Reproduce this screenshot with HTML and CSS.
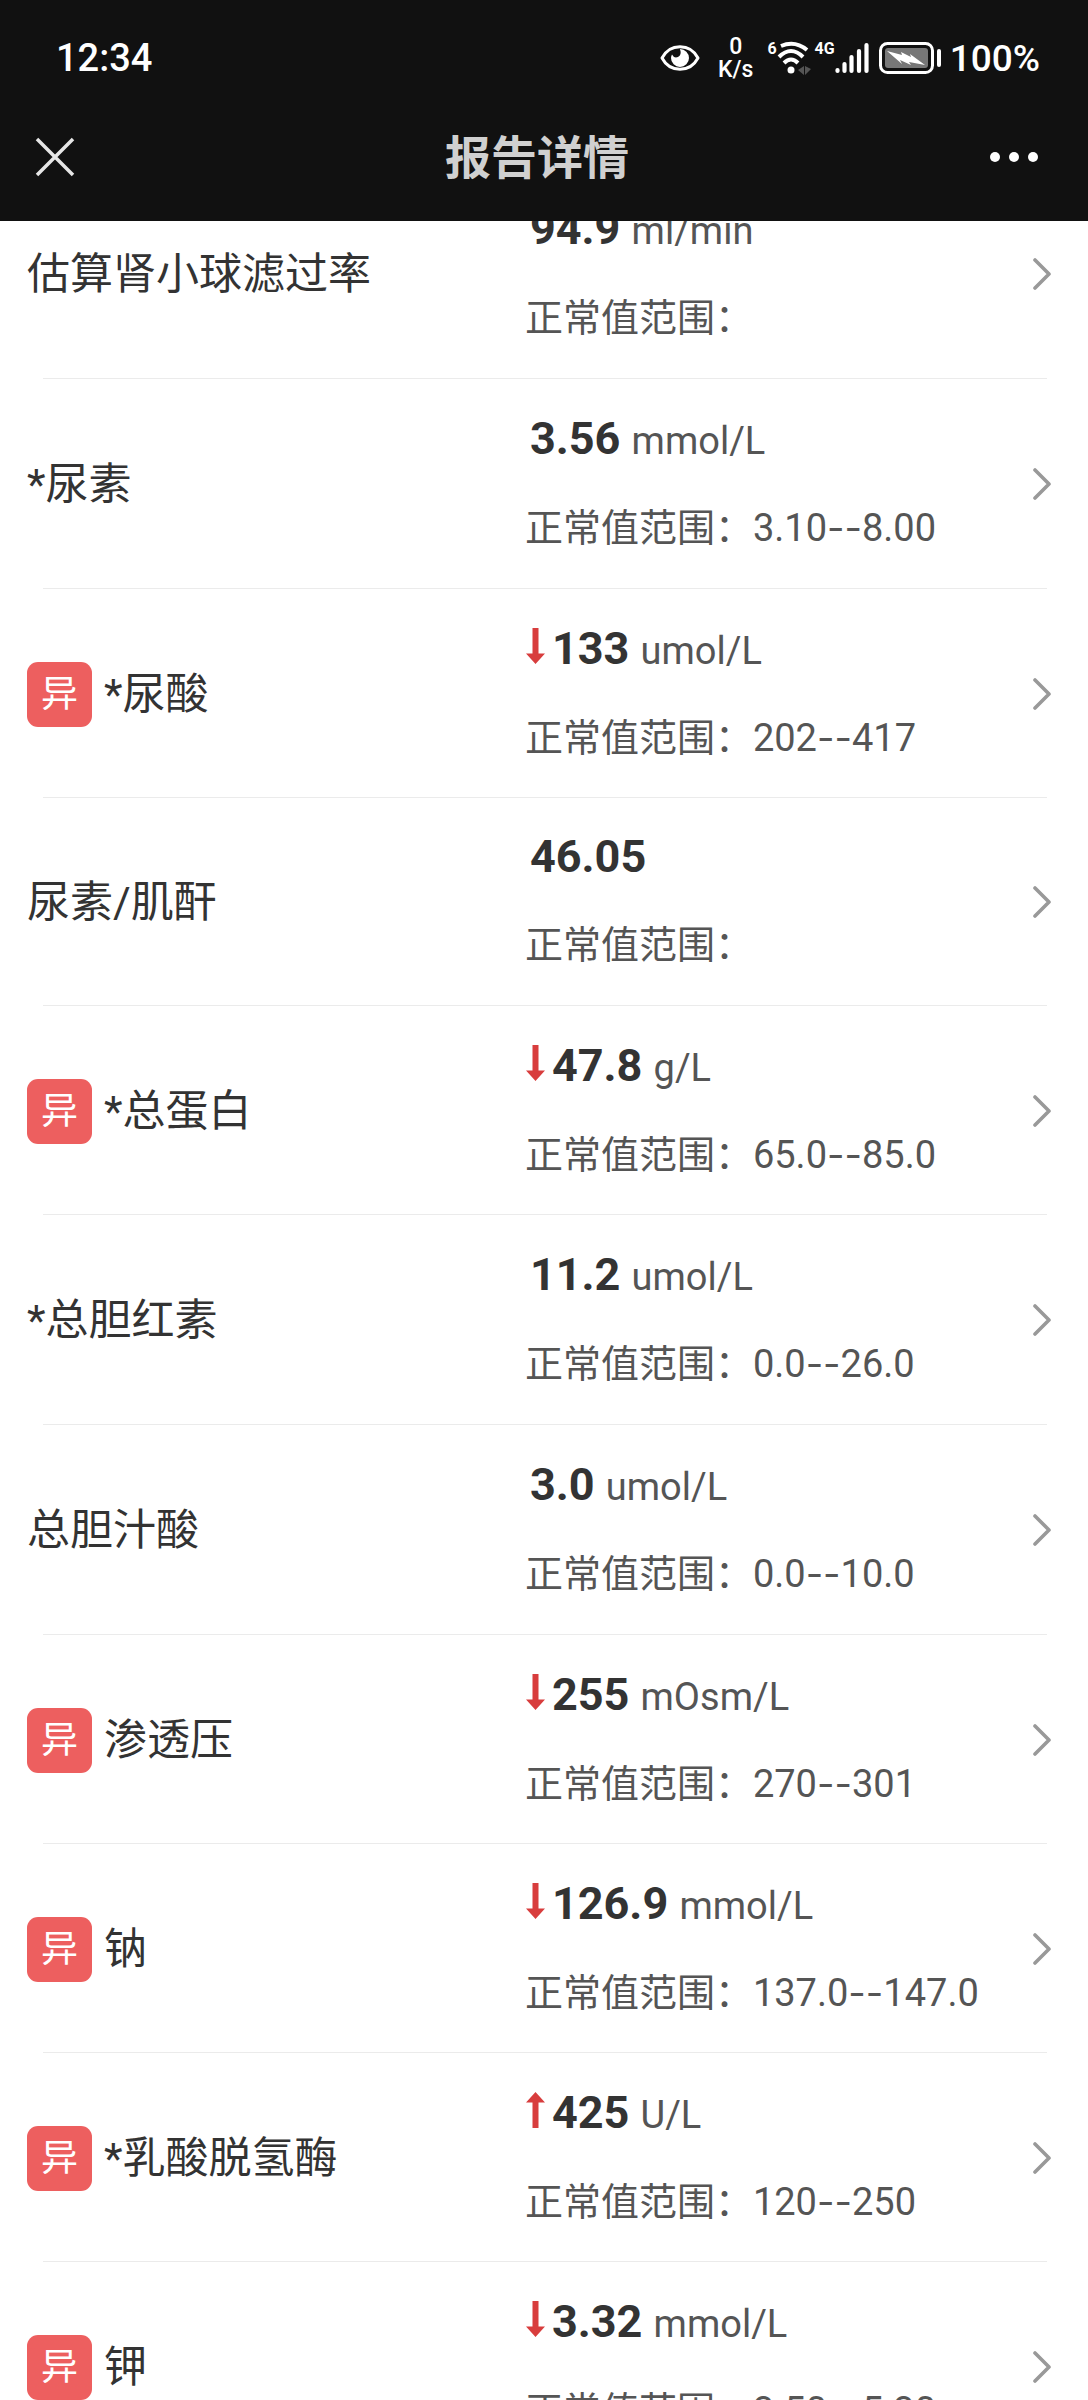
FILE: index.html
```html
<!DOCTYPE html>
<html lang="zh-CN">
<head>
  <meta charset="UTF-8" />
  <meta name="viewport" content="width=device-width, initial-scale=1.0" />
  <title>报告详情</title>
  <link rel="stylesheet" href="styles.css">
</head>
<body>
  <!-- shared icons -->
  <svg class="sprite" aria-hidden="true">
    <symbol id="chevron" viewBox="0 0 18 34">
      <path d="M2 3 L16 17 L2 31" fill="none" stroke="#999" stroke-width="3.6" stroke-linecap="round" stroke-linejoin="round" />
    </symbol>
    <symbol id="arrow-down" viewBox="0 0 19 36">
      <path d="M6.500 0h6v25.500h6.500L9.500 36L0 25.500h6.500z" fill="#d83d3d" />
    </symbol>
    <symbol id="arrow-up" viewBox="0 0 19 36">
      <path d="M6.500 36h6V10.500h6.500L9.500 0L0 10.500h6.500z" fill="#d83d3d" />
    </symbol>
  </svg>

  <header class="top">
    <div class="status">
      <span class="time">12:34</span>
      <div class="status-icons">
        <svg class="eye" width="40" height="28" viewBox="0 0 40 28">
          <path d="M2 14 C10 -1 30 -1 38 14 C30 29 10 29 2 14z" fill="none" stroke="#fff" stroke-width="3" stroke-linejoin="round" />
          <path d="M20 5 a9 9 0 1 1 -9 9 q0 -2 1 -3.500 q2 4 6 2.500 q4 -2 2 -8z" fill="#fff" />
        </svg>
        <div class="speed"><span>0</span><span>K/s</span></div>
        <div class="wifi">
          <span class="tiny">6</span>
          <svg width="34" height="34" viewBox="0 0 34 34">
            <g fill="none" stroke="#fff" stroke-width="4">
              <path d="M4 5 Q18 -1 30 9" />
              <path d="M2 16 Q14 4 26 16" />
              <path d="M7 22 Q14 15 21 22" />
            </g>
            <circle cx="14" cy="29" r="3.500" fill="#fff" />
            <path d="M21 29l6 -4v9zM28 25l6 3l-6 6z" fill="#555" />
          </svg>
        </div>
        <div class="cell">
          <span class="tiny">4G</span>
          <svg width="34" height="34" viewBox="0 0 34 34">
            <g stroke="#fff" stroke-width="4.200" stroke-linecap="round">
              <path d="M2.500 29v1" /><path d="M9.500 23v7" /><path d="M16.500 16v14" /><path d="M24 10v20" /><path d="M31.500 4v26" />
            </g>
          </svg>
        </div>
        <svg class="battery" width="63" height="32" viewBox="0 0 63 32">
          <rect x="1.500" y="1.500" width="52" height="29" rx="7" fill="none" stroke="#fff" stroke-width="3" />
          <rect x="6" y="6" width="43" height="20" rx="3" fill="#777" />
          <path d="M8 9l15 4l-1 -3l10 5l-1 -3l15 11l-16 -3l2 3l-11 -5l2 4z" fill="#fff" />
          <path d="M60 9v14" stroke="#fff" stroke-width="4" stroke-linecap="round" />
        </svg>
        <span class="percent">100%</span>
      </div>
    </div>
    <nav class="nav">
      <button class="nav-btn" type="button" aria-label="关闭">
        <svg width="40" height="40" viewBox="0 0 40 40">
          <path d="M2 2L38 38M38 2L2 38" stroke="#e6e6e6" stroke-width="3.500" />
        </svg>
      </button>
      <h1>报告详情</h1>
      <button class="nav-btn more" type="button" aria-label="更多">
        <svg width="50" height="12" viewBox="0 0 50 12">
          <g fill="#fff"><circle cx="6" cy="6" r="5" /><circle cx="25" cy="6" r="5" /><circle cx="44" cy="6" r="5" /></g>
        </svg>
      </button>
    </nav>
  </header>

  <ul class="list">
    <li>
      <a class="item" href="#">
        <span class="name">估算肾小球滤过率</span>
        <div class="result">
          <p class="value"><b>94.9</b> <span>ml/min</span></p>
          <p class="range">正常值范围：</p>
        </div>
        <svg class="chevron"><use href="#chevron" /></svg>
      </a>
    </li>
    <li>
      <a class="item" href="#">
        <span class="name">*尿素</span>
        <div class="result">
          <p class="value"><b>3.56</b> <span>mmol/L</span></p>
          <p class="range">正常值范围：3.10<span class="dash">--</span>8.00</p>
        </div>
        <svg class="chevron"><use href="#chevron" /></svg>
      </a>
    </li>
    <li>
      <a class="item abnormal" href="#">
        <span class="name"><i class="badge">异</i>*尿酸</span>
        <div class="result">
          <p class="value"><svg class="arrow"><use href="#arrow-down" /></svg><b>133</b> <span>umol/L</span></p>
          <p class="range">正常值范围：202<span class="dash">--</span>417</p>
        </div>
        <svg class="chevron"><use href="#chevron" /></svg>
      </a>
    </li>
    <li>
      <a class="item" href="#">
        <span class="name">尿素/肌酐</span>
        <div class="result">
          <p class="value no-unit"><b>46.05</b></p>
          <p class="range">正常值范围：</p>
        </div>
        <svg class="chevron"><use href="#chevron" /></svg>
      </a>
    </li>
    <li>
      <a class="item abnormal" href="#">
        <span class="name"><i class="badge">异</i>*总蛋白</span>
        <div class="result">
          <p class="value"><svg class="arrow"><use href="#arrow-down" /></svg><b>47.8</b> <span>g/L</span></p>
          <p class="range">正常值范围：65.0<span class="dash">--</span>85.0</p>
        </div>
        <svg class="chevron"><use href="#chevron" /></svg>
      </a>
    </li>
    <li>
      <a class="item" href="#">
        <span class="name">*总胆红素</span>
        <div class="result">
          <p class="value"><b>11.2</b> <span>umol/L</span></p>
          <p class="range">正常值范围：0.0<span class="dash">--</span>26.0</p>
        </div>
        <svg class="chevron"><use href="#chevron" /></svg>
      </a>
    </li>
    <li>
      <a class="item" href="#">
        <span class="name">总胆汁酸</span>
        <div class="result">
          <p class="value"><b>3.0</b> <span>umol/L</span></p>
          <p class="range">正常值范围：0.0<span class="dash">--</span>10.0</p>
        </div>
        <svg class="chevron"><use href="#chevron" /></svg>
      </a>
    </li>
    <li>
      <a class="item abnormal" href="#">
        <span class="name"><i class="badge">异</i>渗透压</span>
        <div class="result">
          <p class="value"><svg class="arrow"><use href="#arrow-down" /></svg><b>255</b> <span>mOsm/L</span></p>
          <p class="range">正常值范围：270<span class="dash">--</span>301</p>
        </div>
        <svg class="chevron"><use href="#chevron" /></svg>
      </a>
    </li>
    <li>
      <a class="item abnormal" href="#">
        <span class="name"><i class="badge">异</i>钠</span>
        <div class="result">
          <p class="value"><svg class="arrow"><use href="#arrow-down" /></svg><b>126.9</b> <span>mmol/L</span></p>
          <p class="range">正常值范围：137.0<span class="dash">--</span>147.0</p>
        </div>
        <svg class="chevron"><use href="#chevron" /></svg>
      </a>
    </li>
    <li>
      <a class="item abnormal" href="#">
        <span class="name"><i class="badge">异</i>*乳酸脱氢酶</span>
        <div class="result">
          <p class="value"><svg class="arrow"><use href="#arrow-up" /></svg><b>425</b> <span>U/L</span></p>
          <p class="range">正常值范围：120<span class="dash">--</span>250</p>
        </div>
        <svg class="chevron"><use href="#chevron" /></svg>
      </a>
    </li>
    <li>
      <a class="item abnormal" href="#">
        <span class="name"><i class="badge">异</i>钾</span>
        <div class="result">
          <p class="value"><svg class="arrow"><use href="#arrow-down" /></svg><b>3.32</b> <span>mmol/L</span></p>
          <p class="range">正常值范围：3.50<span class="dash">--</span>5.30</p>
        </div>
        <svg class="chevron"><use href="#chevron" /></svg>
      </a>
    </li>
  </ul>
</body>
</html>
```
FILE: styles.css
```css
* {
  box-sizing: border-box;
}

html,
body {
  height: 100%;
}

body {
  margin: 0;
  display: flex;
  flex-direction: column;
  overflow: hidden;
  background: #fff;
  color: #333;
  font-family: Roboto, "Noto Sans CJK SC", sans-serif;
}

.sprite {
  position: absolute;
  width: 0;
  height: 0;
}

/* status bar + title */
.top {
  position: relative;
  z-index: 1;
  flex-shrink: 0;
  background: #111;
  color: #fff;
}

.status {
  display: flex;
  justify-content: space-between;
  align-items: center;
  height: 92px;
  padding: 24px 48px 0 56px;
  font-weight: 500;
}

.time {
  font-size: 38px;
}

.status-icons {
  display: flex;
  align-items: center;
}

.speed {
  display: flex;
  flex-direction: column;
  align-items: center;
  margin: 0 14px 0 18px;
  font-size: 23px;
  line-height: 23px;
}

.wifi,
.cell {
  display: flex;
  align-items: flex-start;
}

.tiny {
  font-size: 16px;
  line-height: 16px;
  font-weight: 700;
}

.wifi {
  margin-right: 4px;
}

.battery {
  margin: 0 8px 0 10px;
}

.percent {
  font-size: 37px;
}

.nav {
  display: flex;
  justify-content: space-between;
  align-items: center;
  height: 129px;
  padding: 0 49px 0 35px;
}

.nav-btn {
  display: flex;
  width: 50px;
  padding: 0;
  border: none;
  background: none;
  cursor: pointer;
}

.nav h1 {
  margin: 0;
  padding-bottom: 6px;
  font-size: 46px;
  font-weight: 700;
  color: #d0d0d0;
}

/* the list is scrolled a little way under the header */
.list {
  margin: -52px 0 0;
  padding: 0;
  list-style: none;
}

.list li::after {
  content: "";
  display: block;
  height: 1px;
  margin: 0 41px 0 43px;
  background: #ebebeb;
}

.item {
  display: grid;
  grid-template-columns: 49fr 50fr 18px;
  align-items: center;
  padding: 33px 37px 32px 27px;
  color: inherit;
  text-decoration: none;
}

.item.abnormal {
  padding-bottom: 31px;
}

.name {
  display: flex;
  align-items: center;
  font-size: 43px;
  line-height: 65px;
}

.badge {
  width: 65px;
  height: 65px;
  margin-right: 12px;
  border-radius: 11px;
  background: #ed5f5f;
  color: #fff;
  font-size: 37px;
  font-style: normal;
  text-align: center;
}

.result {
  padding-bottom: 5px;
}

.value,
.range {
  margin: 0;
  white-space: nowrap;
}

.value {
  margin-bottom: 39px;
  padding-left: 5px;
  font-size: 45px;
  line-height: 54px;
}

.value span {
  font-size: 38px;
  line-height: 38px;
  color: #555;
}

.value.no-unit {
  line-height: 52px;
}

.abnormal .value {
  padding-left: 1px;
}

.arrow {
  width: 19px;
  height: 36px;
  margin-right: 7px;
  vertical-align: baseline;
}

.range {
  font-size: 38px;
  line-height: 46px;
  color: #555;
}

/* wider hyphens between the two limits */
.dash {
  font-family: Inter, sans-serif;
  line-height: 38px;
}

.chevron {
  width: 18px;
  height: 34px;
}
```
